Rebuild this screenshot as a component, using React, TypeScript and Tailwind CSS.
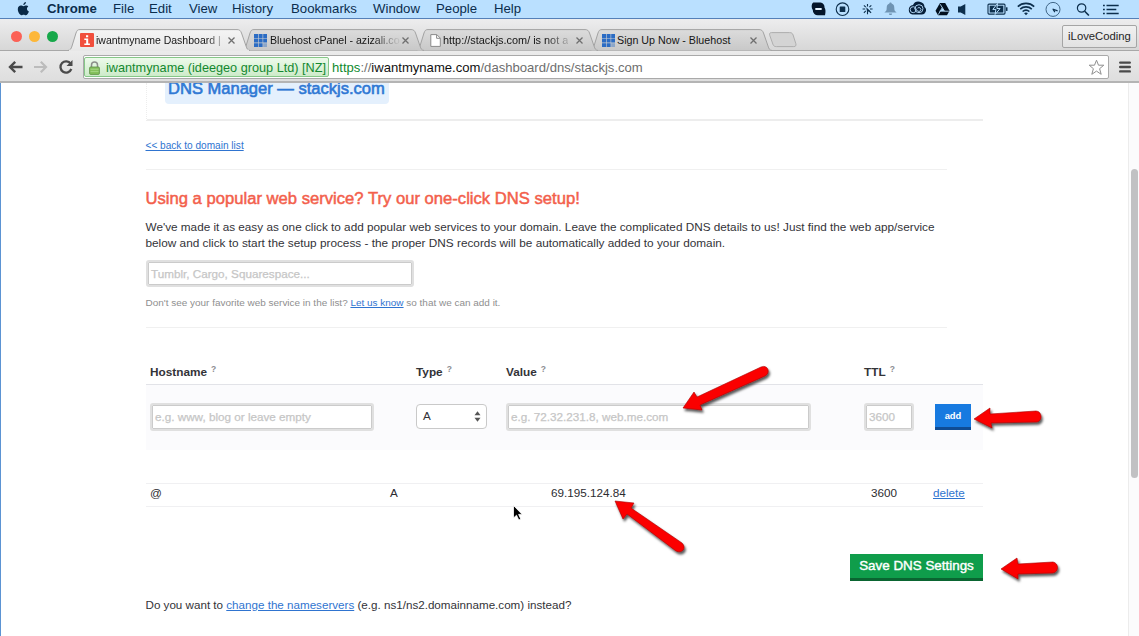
import type { ReactNode } from "react";

const menuItems = [
  { label: "Chrome", cls: "w-[66px] font-bold" },
  { label: "File", cls: "w-[36px]" },
  { label: "Edit", cls: "w-[40px]" },
  { label: "View", cls: "w-[43px]" },
  { label: "History", cls: "w-[59px]" },
  { label: "Bookmarks", cls: "w-[82px]" },
  { label: "Window", cls: "w-[63px]" },
  { label: "People", cls: "w-[58px]" },
  { label: "Help", cls: "w-[40px]" },
];

function StatusIcons() {
  return (
    <div className="ml-auto mr-[20px] flex items-center text-[#0d2f4d]">
      <svg width="15" height="16" viewBox="0 0 15 16">
        <path
          d="M3 1.500h6.500a4.500 4.500 0 0 1 4 5c1.200 1.800 1.300 4 .5 7.800H7.500A5 5 0 0 1 1.800 9C.8 7.500.3 5 1 3.200 1.400 2.200 2 1.500 3 1.500z"
          fill="#03152b"
        />
        <path d="M5 8h5" stroke="#e5f3ff" strokeWidth="1.800" strokeLinecap="round" />
      </svg>
      <svg className="ml-[9px]" width="15" height="16" viewBox="0 0 15 16">
        <circle cx="7.500" cy="8.200" r="6.300" fill="none" stroke="currentColor" strokeWidth="1.100" />
        <rect x="4.700" y="5.400" width="5.600" height="5.600" rx=".6" fill="currentColor" />
      </svg>
      <svg className="ml-[12px]" width="11" height="16" viewBox="0 0 11 16">
        <path
          d="M5.500 3v2.600M5.500 10.600v2.600M.6 8h2.600M8 8h2.600M1.900 4.300l1.900 1.900M7.400 6.200l1.900-1.900M1.900 11.800l1.900-1.900M7.200 10l1.900 1.900"
          stroke="currentColor"
          strokeWidth="1.100"
        />
        <path d="M4.200 6.200l4.300 4-2.100.2-1 1.900z" fill="currentColor" />
      </svg>
      <svg className="ml-[11px]" width="13" height="16" viewBox="0 0 13 16">
        <path
          d="M6.500 1.500c.8 0 1.100.5 1.100 1.100 1.900.6 2.700 2.200 2.700 4.200 0 2.800.5 3.600 2.300 4.600H.4c1.800-1 2.300-1.800 2.300-4.600 0-2 .8-3.600 2.700-4.200 0-.6.300-1.100 1.100-1.100zM4.900 12.400h3.200c0 1-.7 1.500-1.600 1.500s-1.600-.5-1.600-1.500z"
          fill="#6e93b3"
        />
      </svg>
      <svg className="ml-[10px]" width="19" height="16" viewBox="0 0 19 16">
        <path d="M6 3.900A6 5.500 0 0 1 17.500 6 4.300 4.300 0 0 1 14 13.500H5.500A4.900 4.900 0 0 1 6 3.900z" fill="#061f3a" />
        <g fill="none" stroke="#a9cdec" strokeWidth="1">
          <circle cx="6.200" cy="8.700" r="3" />
          <circle cx="12" cy="7.700" r="4" />
          <path d="M10.600 7.200a1.900 1.900 0 1 1 0 2.600L7.300 7.200" />
        </g>
      </svg>
      <svg className="ml-[9px]" width="15" height="16" viewBox="0 0 15 16">
        <path d="M5 2h5.200l4.300 7.700-2.500 4.600H3L.5 9.800z" fill="#02101f" />
        <path d="M5.200 3.200l4.300 7M7.200 6.700L3.300 13.600M4.500 10.200h9.300" stroke="#b5dcfb" strokeWidth=".9" fill="none" />
        <path d="M7.300 6.900l1.900 3.200H5.500z" fill="#b5dcfb" />
      </svg>
      <svg className="ml-[7px]" width="10" height="16" viewBox="0 0 10 16">
        <path d="M1 5.500h2.700L8.300 3v11L3.700 11.500H1z" fill="currentColor" />
      </svg>
      <svg className="ml-[20px]" width="21" height="16" viewBox="0 0 21 16">
        <rect x="1" y="3.100" width="17" height="10" rx="1" fill="none" stroke="currentColor" strokeWidth="1.100" />
        <rect x="19" y="6.300" width="1.500" height="3.600" fill="currentColor" />
        <rect x="2.700" y="4.700" width="13.600" height="6.800" fill="currentColor" />
        <path d="M10.500 2.500L5.800 8.400h3.100l-.8 5.100 5-6H9.900z" fill="currentColor" stroke="#bae0ff" strokeWidth="1" />
      </svg>
      <svg className="ml-[9px]" width="18" height="16" viewBox="0 0 18 16">
        <g fill="none" stroke="currentColor" strokeWidth="1.600">
          <path d="M.8 5.600c4.600-4.300 11.800-4.300 16.400 0M3.200 8.100c3.300-3 8.300-3 11.600 0M5.600 10.500c2-1.700 4.800-1.700 6.800 0" />
        </g>
        <path d="M9 14.200l-1.900-2c1.200-1 2.600-1 3.800 0z" fill="currentColor" />
      </svg>
      <svg className="ml-[10px]" width="16" height="16" viewBox="0 0 16 16">
        <circle cx="8" cy="8.400" r="7" fill="none" stroke="#416788" strokeWidth="1" />
        <path d="M7.600 8l5 1.900M7.900 8.200l2 2.900" stroke="currentColor" strokeWidth="1.200" />
      </svg>
      <svg className="ml-[15px]" width="14" height="16" viewBox="0 0 14 16">
        <circle cx="5.600" cy="7" r="4.200" fill="none" stroke="currentColor" strokeWidth="1.200" />
        <path d="M8.700 10.200l4.200 4.300" stroke="currentColor" strokeWidth="1.600" />
      </svg>
      <svg className="ml-[13px]" width="16" height="16" viewBox="0 0 16 16">
        <path
          d="M0 4.500h1.800M0 8.500h1.800M0 12.500h1.800M3.500 4.500h12.200M3.500 8.500h9.800M3.500 12.500h12.200"
          stroke="currentColor"
          strokeWidth="1.600"
        />
      </svg>
    </div>
  );
}

function MenuBar() {
  return (
    <div className="flex h-[19px] items-center border-b border-[#5580b8] bg-[#bae0ff] pl-[17px] text-[13.2px] leading-[18px] text-[#0b2d4d]">
      <svg className="mr-[17px]" width="13" height="16" viewBox="0 0 13 16">
        <path
          d="M8.900 1c.1 1.600-1.100 3-2.600 3.100C6.200 2.600 7.500 1.200 8.900 1zM11.300 5.500c-2.100 1.300-1.600 4 .6 4.900-.5 1.500-1.800 3.800-3.200 3.800-.8 0-1.100-.5-2.100-.5s-1.300.5-2.100.5C2.800 14.200.8 10.800.8 8.300c0-2.400 1.500-3.700 3.100-3.700 1.100 0 1.900.6 2.600.6.600 0 1.600-.7 2.900-.7.8 0 1.500.4 1.900 1z"
          fill="#0a2a48"
        />
      </svg>
      {menuItems.map((m) => (
        <span key={m.label} className={m.cls}>
          {m.label}
        </span>
      ))}
      <StatusIcons />
    </div>
  );
}

function BluehostIcon() {
  return (
    <svg width="13" height="13" viewBox="0 0 13 13">
      <g fill="#2b6cc4">
        <path d="M0 0h4v4H0zM4.600 0h4v4h-4zM9.200 0H13v4H9.200zM0 4.600h4v4H0zM4.600 4.600h4v4h-4zM9.200 4.600H13v4H9.200zM0 9.200h4V13H0zM4.600 9.200h4V13h-4z" />
        <path d="M9.200 9.200H13V13H9.200z" opacity=".4" />
      </g>
    </svg>
  );
}

type TabProps = {
  title: string;
  icon: ReactNode;
  cls: string;
  textCls: string;
  active?: boolean;
};

function Tab({ title, icon, cls, textCls, active }: TabProps) {
  return (
    <div className={`relative -mr-[8px] h-[22px] w-[182px] shrink-0 ${cls}`}>
      <svg className="absolute inset-0" width="182" height="22" viewBox="0 0 182 22">
        <defs>
          <linearGradient id={active ? "tabOn" : "tabOff"} x1="0" y1="0" x2="0" y2="1">
            <stop offset="0" stopColor={active ? "#f4f4f4" : "#dcdcdc"} />
            <stop offset="1" stopColor={active ? "#e8e8e8" : "#c8c8c8"} />
          </linearGradient>
        </defs>
        <path
          d="M0 21.500C2.500 21 3 20 4 17L8 4C9 1.500 9.500.6 12 .6H169C171.500.6 172.500 1.500 173.500 4L178 17C179 20 179.500 21 182 21.500"
          fill={active ? "url(#tabOn)" : "url(#tabOff)"}
          stroke="#a3a3a3"
          strokeWidth="1"
        />
        {active && <path d="M1 21.500H181" stroke="#e8e8e8" strokeWidth="1.500" />}
      </svg>
      <div className="relative flex h-[22px] items-center pl-[12px]">
        <span className="flex w-[16px] shrink-0">{icon}</span>
        <span className="flex w-[131px] shrink-0">
          <span className={`whitespace-nowrap leading-[16px] text-[#151515] ${textCls}`}>{title}</span>
        </span>
        <svg className="shrink-0" width="9" height="9" viewBox="0 0 9 9">
          <path d="M1.500 1.500l6 6M7.500 1.500l-6 6" stroke="#6f6f6f" strokeWidth="1.300" />
        </svg>
      </div>
    </div>
  );
}

function TabStrip() {
  return (
    <div className="flex h-[32px] items-end border-b border-[#a8a8a8] bg-linear-to-b from-[#ededee] to-[#d7d7d7] pl-[11px]">
      <div className="mb-[8px] flex w-[57px] gap-[7px]">
        <span className="size-[11px] rounded-full bg-[#fb6156]" />
        <span className="size-[11px] rounded-full bg-[#fdb739]" />
        <span className="size-[11px] rounded-full bg-[#17a84a]" />
      </div>
      <div className="-mb-px flex">
        <Tab
          active
          cls="z-40"
          textCls="text-[10.5px] [mask-image:linear-gradient(to_right,black_88%,rgba(0,0,0,0.35)_100%)]"
          title="iwantmyname Dashboard |"
          icon={
            <svg width="14" height="14" viewBox="0 0 14 14">
              <rect width="14" height="14" rx="1" fill="#f14e3c" />
              <path d="M6 2.200h2.200v2H6zM4.300 5.500h3.900v5h1.700V12H4.300v-1.500h1.900V7H4.300z" fill="#fff" />
            </svg>
          }
        />
        <Tab
          cls="z-30"
          textCls="text-[10.6px] [mask-image:linear-gradient(to_right,black_80%,rgba(0,0,0,0.1)_98%)]"
          title="Bluehost cPanel - azizali.co"
          icon={<BluehostIcon />}
        />
        <Tab
          cls="z-20"
          textCls="text-[10.9px] -ml-px [mask-image:linear-gradient(to_right,black_82%,rgba(0,0,0,0.2)_100%)]"
          title="http://stackjs.com/ is not a"
          icon={
            <svg className="ml-[2px]" width="11" height="13" viewBox="0 0 11 13">
              <path d="M.8.600h6l3.500 3.500v8.300H.8z" fill="#fff" stroke="#8a8a8a" />
              <path d="M6.600.8v3.500h3.500" fill="none" stroke="#8a8a8a" />
            </svg>
          }
        />
        <Tab cls="z-10" textCls="text-[10.7px] -ml-px" title="Sign Up Now - Bluehost" icon={<BluehostIcon />} />
      </div>
      <svg className="mb-[2px] ml-[4px]" width="29" height="16" viewBox="0 0 29 16">
        <path
          d="M3.500.6h18c2 0 3 .6 3.600 2.400l2.700 8.600c.6 2-.2 3-2 3H8.500c-2 0-3-.6-3.600-2.400L1.800 3.500C1.200 1.600 1.700.6 3.500.6z"
          fill="#d4d4d4"
          stroke="#aeaeae"
        />
      </svg>
      <div className="mb-[2px] ml-auto mr-[2px] flex h-[23px] w-[75px] items-center justify-center rounded-[2px] border border-[#a5a5a5] bg-linear-to-b from-[#f1f1f1] to-[#e2e2e2] text-[11.3px] text-[#262626]">
        iLoveCoding
      </div>
    </div>
  );
}

function Toolbar() {
  return (
    <div className="flex h-[32px] items-center border-b-2 border-[#b4b4b4] bg-linear-to-b from-[#ebebeb] to-[#dedede] pt-[2px] pl-[8px]">
      <svg width="15" height="14" viewBox="0 0 15 14">
        <path d="M14.500 7H2.500M7.200 1.800L2 7l5.200 5.200" fill="none" stroke="#4b4b4b" strokeWidth="2.400" />
      </svg>
      <svg className="ml-[10px]" width="15" height="14" viewBox="0 0 15 14">
        <path d="M1 7h11.500M7.800 1.800L13 7l-5.200 5.200" fill="none" stroke="#bcbcbc" strokeWidth="2.200" />
      </svg>
      <svg className="ml-[10px]" width="16" height="16" viewBox="0 0 16 16">
        <path d="M12.700 4.800A5.600 5.600 0 1 0 13.300 10" fill="none" stroke="#4b4b4b" strokeWidth="2.300" />
        <path d="M14.500 1v6H8.500z" fill="#4b4b4b" />
      </svg>
      <div className="ml-[9px] flex h-[24px] w-[1026px] items-center rounded-[2px] border border-[#a9a9a9] bg-white text-[13.100px] leading-[20px]">
        <div className="flex h-[20px] w-[245px] items-center rounded-[2px] border border-[#86c788] bg-linear-to-b from-[#edfaeb] to-[#cdebc9] pt-px pl-[4px] text-[12.700px] whitespace-nowrap text-[#13882f]">
          <svg className="mr-[6px]" width="11" height="14" viewBox="0 0 11 14">
            <path d="M2.500 7V4a3 3 0 0 1 6 0v3" fill="none" stroke="#8b8f8a" strokeWidth="1.500" />
            <rect x=".6" y="6" width="9.800" height="7.400" rx="1" fill="#85c15c" stroke="#5b8d43" strokeWidth=".8" />
            <path d="M1.500 8.300h8M1.500 10.500h8" stroke="#a9d98a" strokeWidth=".8" />
          </svg>
          iwantmyname (ideegeo group Ltd) [NZ]
        </div>
        <span className="mt-px ml-[3px] whitespace-nowrap text-[#6e6e6e]">
          <span className="text-[#0f8a2e]">https</span>://<span className="text-[#111]">iwantmyname.com</span>
          /dashboard/dns/stackjs.com
        </span>
        <svg className="mr-[3px] ml-auto" width="17" height="17" viewBox="0 0 17 17">
          <path
            d="M8.500 1.200l2 5h5.300l-4.200 3.500 1.600 5.600-4.700-3.200-4.700 3.200 1.600-5.600L1.200 6.200h5.300z"
            fill="#fff"
            stroke="#8f8f8f"
            strokeLinejoin="round"
          />
        </svg>
      </div>
      <svg className="ml-[10px]" width="12" height="12" viewBox="0 0 12 12">
        <path d="M1.200 1.600h9.600M1.200 6h9.600M1.200 10.400h9.600" stroke="#4a4a4a" strokeWidth="2.400" strokeLinecap="round" />
      </svg>
    </div>
  );
}

function Field({ text, cls }: { text: string; cls: string }) {
  return (
    <div className={`rounded-[3px] border-2 border-[#e0e0e0] ${cls}`}>
      <div className="flex h-full items-center rounded-[1px] border border-[#cbcbcb] bg-white pl-[2px] whitespace-nowrap text-[#c6c6c6] [-webkit-text-stroke:0.25px_#c6c6c6]">
        {text}
      </div>
    </div>
  );
}

function Head({ text, cls }: { text: string; cls: string }) {
  return (
    <div className={`flex text-[11.800px] font-bold text-[#333338] ${cls}`}>
      {text}
      <span className="-mt-[3px] ml-[4px] text-[8.500px] text-[#8d8d92]">?</span>
    </div>
  );
}

const link = "text-[#2f74d0] underline";

function DnsPage() {
  return (
    <div className="flex w-[838px] shrink-0 flex-col text-[11.700px] leading-[16px] text-[#333338]">
      <div className="ml-px h-[38px] border-b-2 border-l border-b-[#ededed] border-l-[#ededed] [border-left-style:dotted] pl-[18px]">
        <div className="h-[21px] w-[224px] rounded-b-[4px] bg-[#e4f0fd] pl-[3px] text-[16.550px] leading-[12px] whitespace-nowrap text-[#2f78d4] [-webkit-text-stroke:0.6px_#2f78d4]">
          DNS Manager — stackjs.com
        </div>
      </div>
      <div className="mt-[17px] pl-[0.5px] text-[10.100px]">
        <span className={link}>&lt;&lt; back to domain list</span>
      </div>
      <div className="mt-[15px] ml-px w-[801px] border-t border-[#f0f0f0]" />
      <div className="mt-[19px] h-[20px] pl-[0.5px] text-[16.640px] leading-[20px] whitespace-nowrap text-[#f35f4c] [-webkit-text-stroke:0.5px_#f35f4c]">
        Using a popular web service? Try our one-click DNS setup!
      </div>
      <div className="mt-[10px] pl-[0.5px] text-[11.760px] whitespace-nowrap">
        We've made it as easy as one click to add popular web services to your domain. Leave the complicated DNS
        details to us! Just find the web app/service
        <br />
        <span className="text-[11.800px]">
          below and click to start the setup process - the proper DNS records will be automatically added to your
          domain.
        </span>
      </div>
      <Field text="Tumblr, Cargo, Squarespace..." cls="mt-[9px] ml-px h-[27px] w-[268px]" />
      <div className="mt-[8px] pl-[0.5px] text-[9.960px] whitespace-nowrap text-[#8f8f8f]">
        Don't see your favorite web service in the list? <span className={link}>Let us know</span> so that we can add
        it.
      </div>
      <div className="mt-[16px] ml-px w-[801px] border-t border-[#f0f0f0]" />
      <div className="mt-[36px] ml-px flex h-[21px] border-b border-[#e2e3e8] pl-[4px]">
        <Head text="Hostname" cls="w-[266px]" />
        <Head text="Type" cls="w-[90px]" />
        <Head text="Value" cls="w-[358px]" />
        <Head text="TTL" cls="" />
      </div>
      <div className="ml-px flex h-[65px] items-start bg-[#fbfbfd] pt-[18px] pl-[4px]">
        <Field text="e.g. www, blog or leave empty" cls="h-[28px] w-[224px]" />
        <div className="mt-px ml-[42px] flex h-[25px] w-[71px] items-center justify-between rounded-[4px] border border-[#c9c9c9] bg-white pr-[5px] pb-px pl-[6px]">
          A
          <svg width="7" height="11" viewBox="0 0 7 11">
            <path d="M3.500.3L6.500 4.300h-6zM3.500 10.700L.5 6.700h6z" fill="#555" />
          </svg>
        </div>
        <Field text="e.g. 72.32.231.8, web.me.com" cls="ml-[19px] h-[28px] w-[305px]" />
        <Field text="3600" cls="ml-[53px] h-[28px] w-[50px]" />
        <div className="mt-px ml-[21px] flex h-[26px] w-[36px] items-center justify-center border-b-[3px] border-[#0f4c94] bg-[#177ae0] text-[9.400px] font-bold text-white">
          add
        </div>
      </div>
      <div className="mt-[33px] ml-px flex h-[24px] items-start border-y border-[#f0f0f2] pt-px pl-[4px] text-[#2c2c30]">
        <span className="w-[240px]">@</span>
        <span className="w-[161px]">A</span>
        <span className="w-[320px]">69.195.124.84</span>
        <span className="w-[62px]">3600</span>
        <span className={link}>delete</span>
      </div>
      <div className="mt-[47px] flex h-[27px] w-[133px] items-center justify-center self-end border-b-[3px] border-[#0a6531] bg-[#0f9d4b] text-[13.400px] whitespace-nowrap text-white [-webkit-text-stroke:0.4px_white]">
        Save DNS Settings
      </div>
      <div className="mt-[16px] pl-[0.5px] text-[11.640px] whitespace-nowrap">
        Do you want to <span className={link}>change the nameservers</span> (e.g. ns1/ns2.domainname.com) instead?
      </div>
    </div>
  );
}

function Annotations() {
  return (
    <svg className="pointer-events-none absolute inset-0 z-50" width="1139" height="636" viewBox="0 0 1139 636">
      <defs>
        <filter id="drop" x="-20%" y="-40%" width="150%" height="200%">
          <feDropShadow dx="1.500" dy="2.500" stdDeviation="1.300" floodColor="#000" floodOpacity=".65" />
        </filter>
      </defs>
      <g fill="#fb0505" stroke="#a80000" strokeWidth=".6" strokeLinejoin="round" filter="url(#drop)">
        <path d="M683 408L694 392L697 397L761 367C768 364 771 373 765 376L700 405L702 410Z" />
        <path d="M615 501L634 503L631 508L682 543C687 548 682 554 676 551L627 514L623 519Z" />
        <path d="M974 419L990 408L990 414L1036 411C1042 411 1043 421 1037 422L991 423L992 428Z" />
        <path d="M1001 569L1017 558L1018 564L1053 562C1059 563 1059 572 1053 573L1018 574L1018 579Z" />
      </g>
      <path
        d="M513.500 505.500v12.500l3-2.800 2.300 4.800 2-.9-2.200-4.700h3.600z"
        fill="#000"
        stroke="#fff"
        strokeWidth=".8"
      />
    </svg>
  );
}

export default function App() {
  return (
    <div className="relative flex h-[636px] w-[1139px] flex-col overflow-hidden bg-white font-['Liberation_Sans',Arial,sans-serif]">
      <MenuBar />
      <TabStrip />
      <Toolbar />
      <div className="flex h-[553px] border-l border-[#5b93d3]">
        <div className="flex flex-1 overflow-hidden pl-[144px]">
          <DnsPage />
        </div>
        <div className="w-[11px] border-l border-[#ececec] bg-[#fbfbfc] pt-[86px] pl-[2px]">
          <div className="h-[309px] w-[7px] rounded-full bg-[#c1c1c3]" />
        </div>
      </div>
      <Annotations />
    </div>
  );
}
